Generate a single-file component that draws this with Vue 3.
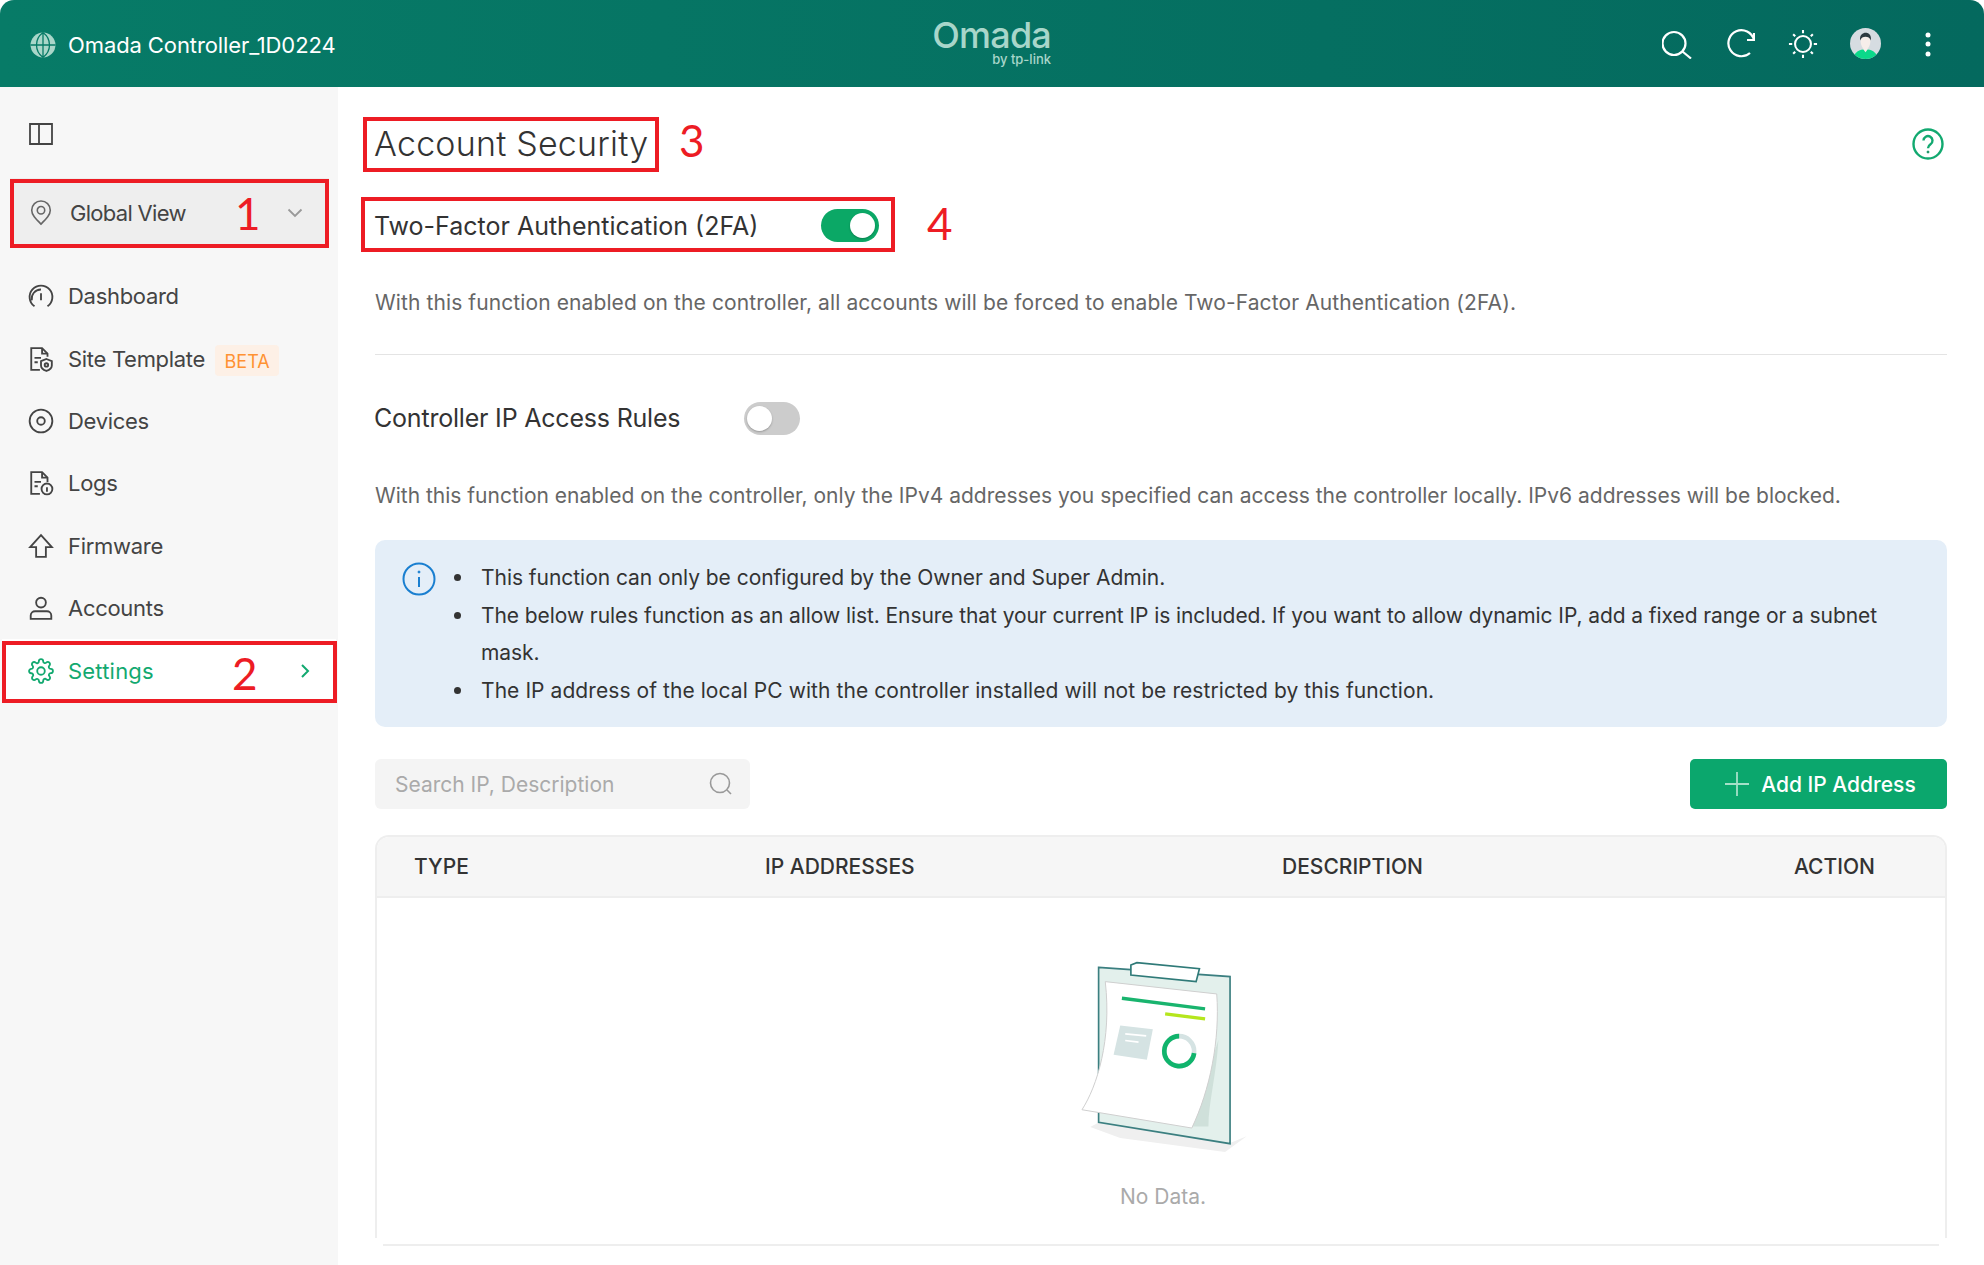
<template>
  <div class="page">
    <header class="topbar">
      <div class="brand">
        <svg class="globe" viewBox="0 0 24 24">
          <circle cx="12" cy="12" r="11.5" fill="#a9d6c9" />
          <path d="M12 .5v23M.5 12h23M12 .5c-8 6-8 17 0 23M12 .5c8 6 8 17 0 23" fill="none" stroke="#067a66" stroke-width="1.2" />
        </svg>
        <span>Omada Controller_1D0224</span>
      </div>
      <div class="logo">
        <span class="logo-name">Omada</span>
        <span class="logo-sub">by tp-link</span>
      </div>
      <div class="top-icons">
        <svg viewBox="0 0 30 30" class="top-icon">
          <circle cx="12" cy="14.500" r="11.500" />
          <path d="M20.500 22.500l8.500 7" />
        </svg>
        <svg viewBox="0 0 30 30" class="top-icon">
          <path d="M25 24A13 13 0 1 1 29 11" />
          <path d="M29 4v7h-7" />
        </svg>
        <svg viewBox="0 0 32 32" class="top-icon">
          <circle cx="16" cy="16" r="8.500" />
          <path d="M16 1v3.500M16 27.500V31M1 16h3.500M27.500 16H31M5.500 5.500l2.200 2.200M24.300 24.300l2.200 2.200M5.500 26.500l2.200-2.200M24.300 7.700l2.200-2.200" />
        </svg>
        <svg viewBox="0 0 32 32" class="avatar">
          <clipPath id="av"><circle cx="16" cy="16" r="16" /></clipPath>
          <g clip-path="url(#av)">
            <rect width="32" height="32" fill="#d6dce1" />
            <path d="M3 32c1-7 7-10 13-10s12 3 13 10z" fill="#0bd98a" />
            <path d="M13 21h6l-3 4z" fill="#f6eeea" />
            <ellipse cx="16" cy="14" rx="5" ry="8" fill="#f6eeea" />
            <path d="M10.500 13c-1-6 3-8 5.500-8s6.500 1.500 5.500 8c-1-3-3-4-5.500-4s-4.500 1-5.500 4z" fill="#2c3a40" />
          </g>
        </svg>
        <svg viewBox="0 0 28 28" class="top-dots">
          <circle cx="14" cy="5" r="2.500" />
          <circle cx="14" cy="14" r="2.500" />
          <circle cx="14" cy="24" r="2.500" />
        </svg>
      </div>
    </header>

    <div class="body-wrap">
      <aside class="sidebar">
        <svg class="collapse" viewBox="0 0 24 22">
          <path d="M1 1h22v20H1zM10 1v20" />
        </svg>
        <div class="site-select">
          <svg class="nav-icon" viewBox="0 0 24 28">
            <path d="M12 26c-6-6-10-10-10-15a10 10 0 0 1 20 0c0 5-4 9-10 15z" />
            <circle cx="12" cy="11" r="4" />
          </svg>
          <span>Global View</span>
          <svg class="chev" viewBox="0 0 16 10"><path d="M1.500 1.500l6.500 6.500 6.500-6.500" /></svg>
        </div>
        <nav class="menu">
          <a v-for="item in menu" :key="item.name" class="menu-item" :class="{ active: item.active }">
            <svg class="nav-icon" viewBox="0 0 24 24" v-html="item.icon"></svg>
            <span>{{ item.name }}</span>
            <em v-if="item.badge" class="badge">{{ item.badge }}</em>
            <svg v-if="item.active" class="chev-right" viewBox="0 0 10 16"><path d="M2 2l6 6-6 6" /></svg>
          </a>
        </nav>
      </aside>

      <main class="content">
        <div class="title-row">
          <h1>Account Security</h1>
          <svg class="help" viewBox="0 0 32 32">
            <circle cx="16" cy="16" r="14.500" />
            <path d="M11.500 12.500a4.500 4.500 0 1 1 7 3.800c-1.700 1.100-2.500 2-2.500 4" />
            <circle cx="16" cy="24" r="1" class="dot" />
          </svg>
        </div>
        <div class="switch-row">
          <h2 class="h-2fa">Two-Factor Authentication (2FA)</h2>
          <span class="switch on"></span>
        </div>
        <p class="desc first">With this function enabled on the controller, all accounts will be forced to enable Two-Factor Authentication (2FA).</p>
        <hr class="divider" />
        <div class="switch-row second">
          <h2 class="h-rules">Controller IP Access Rules</h2>
          <span class="switch"></span>
        </div>
        <p class="desc">With this function enabled on the controller, only the IPv4 addresses you specified can access the controller locally. IPv6 addresses will be blocked.</p>

        <div class="info">
          <svg class="info-icon" viewBox="0 0 34 34">
            <circle cx="17" cy="17" r="15.500" />
            <path d="M17 15v10" />
            <circle cx="17" cy="10" r="1" class="dot" />
          </svg>
          <ul>
            <li v-for="note in notes" :key="note">{{ note }}</li>
          </ul>
        </div>

        <div class="toolbar">
          <div class="search">
            <span>Search IP, Description</span>
            <svg viewBox="0 0 24 24"><circle cx="11" cy="11" r="9.500" /><path d="M18 18l4 4" /></svg>
          </div>
          <button class="add-btn">
            <svg viewBox="0 0 24 24"><path d="M12 0v24M0 12h24" /></svg>
            Add IP Address
          </button>
        </div>

        <div class="table">
          <div class="thead">
            <span v-for="col in columns" :key="col">{{ col }}</span>
          </div>
          <div class="tbody">
            <svg class="empty-art" viewBox="120 90 500 580">
              <path d="M150 592L175 578L570 640L620 620L555 667L240 625z" fill="#efefef" />
              <path d="M175 112L570 140V642L175 578z" fill="#e3f0ec" stroke="#3b7f80" stroke-width="5" />
              <path d="M535 330C530 430 505 520 505 590L455 590z" fill="#cfe0da" />
              <path d="M272 105L290 98L478 116L468 155L272 135z" fill="#fff" stroke="#2f7a78" stroke-width="5" />
              <path d="M195 155L530 192C540 330 510 480 455 595L125 540C170 470 215 330 195 155z" fill="#fff" stroke="#cfcfcf" stroke-width="3" />
              <path d="M245 205L495 237" stroke="#19b46e" stroke-width="10" />
              <path d="M375 252L495 267" stroke="#b5e61d" stroke-width="10" />
              <path d="M240 287L338 298L320 390L220 375z" fill="#d5e3e3" />
              <path d="M255 312L318 318M255 332L295 337" stroke="#fff" stroke-width="5" />
              <circle cx="417" cy="364" r="45" fill="none" stroke="#d5e3e3" stroke-width="14" />
              <path d="M417 319A45 45 0 1 0 462 370" fill="none" stroke="#10b46c" stroke-width="14" />
            </svg>
            <p class="no-data">No Data.</p>
          </div>
        </div>
        <div class="table-end"></div>
      </main>
    </div>

    <!-- red call-outs drawn on top of the screenshot -->
    <i class="mark mark-1"></i>
    <i class="mark mark-2"></i>
    <i class="mark mark-3"></i>
    <i class="mark mark-4"></i>
    <b class="num num-1">1</b>
    <b class="num num-2">2</b>
    <b class="num num-3">3</b>
    <b class="num num-4">4</b>
  </div>
</template>

<script setup>
const menu = [
  {
    name: 'Dashboard',
    icon: '<path d="M6 21.500A10.500 10.500 0 1 1 18 21.500"/><path d="M3.500 16A8.500 8.500 0 0 1 12 6"/><path d="M12 16V9.500"/>',
  },
  {
    name: 'Site Template',
    badge: 'BETA',
    icon: '<path d="M11 22H3V2h10l5 5v3"/><path d="M13 2v5h5M6 11h6M6 15h3"/><path d="M17 12l5 2v4c0 2-2 4-5 5-3-1-5-3-5-5v-4z"/><circle cx="17" cy="17.500" r="1.600"/>',
  },
  {
    name: 'Devices',
    icon: '<circle cx="12" cy="12" r="10.500"/><circle cx="12" cy="12" r="3.500"/>',
  },
  {
    name: 'Logs',
    icon: '<path d="M11 22H3V2h10l5 5v4"/><path d="M13 2v5h5M6 11h6M6 15h3"/><circle cx="17.500" cy="17.500" r="5"/><path d="M17.500 16v4M17.500 14.500v.1"/>',
  },
  {
    name: 'Firmware',
    icon: '<path d="M12 2L2 13h5.500v9h9v-9H22z"/>',
  },
  {
    name: 'Accounts',
    icon: '<circle cx="12" cy="7" r="4.500"/><path d="M2.500 22v-3c0-2.500 2-4 4-4h11c2 0 4 1.500 4 4v3z"/>',
  },
  {
    name: 'Settings',
    active: true,
    icon: '<circle cx="12" cy="12" r="3.500"/><path d="M19.400 15a1.650 1.650 0 0 0 .33 1.820l.06.06a2 2 0 0 1 0 2.830 2 2 0 0 1-2.830 0l-.06-.06a1.650 1.650 0 0 0-1.820-.33 1.650 1.650 0 0 0-1 1.510V21a2 2 0 0 1-2 2 2 2 0 0 1-2-2v-.09A1.650 1.650 0 0 0 9 19.400a1.650 1.650 0 0 0-1.820.33l-.06.06a2 2 0 0 1-2.830 0 2 2 0 0 1 0-2.830l.06-.06a1.650 1.650 0 0 0 .33-1.820 1.650 1.650 0 0 0-1.510-1H3a2 2 0 0 1-2-2 2 2 0 0 1 2-2h.09A1.650 1.650 0 0 0 4.600 9a1.650 1.650 0 0 0-.33-1.820l-.06-.06a2 2 0 0 1 0-2.830 2 2 0 0 1 2.830 0l.06.06a1.650 1.650 0 0 0 1.820.33H9a1.650 1.650 0 0 0 1-1.510V3a2 2 0 0 1 2-2 2 2 0 0 1 2 2v.09a1.650 1.650 0 0 0 1 1.510 1.650 1.650 0 0 0 1.820-.33l.06-.06a2 2 0 0 1 2.830 0 2 2 0 0 1 0 2.830l-.06.06a1.650 1.650 0 0 0-.33 1.820V9a1.650 1.650 0 0 0 1.510 1H21a2 2 0 0 1 2 2 2 2 0 0 1-2 2h-.09a1.650 1.650 0 0 0-1.510 1z"/>',
  },
]

const notes = [
  'This function can only be configured by the Owner and Super Admin.',
  'The below rules function as an allow list. Ensure that your current IP is included. If you want to allow dynamic IP, add a fixed range or a subnet mask.',
  'The IP address of the local PC with the controller installed will not be restricted by this function.',
]

const columns = ['TYPE', 'IP ADDRESSES', 'DESCRIPTION', 'ACTION']
</script>

<style>
html,
body {
  margin: 0;
  background: #fff;
}
</style>

<style scoped>
.page {
  position: relative;
  width: 1984px;
  height: 1265px;
  overflow: hidden;
  font-family: Inter, "Liberation Sans", sans-serif;
  color: #333;
  background: #fff;
}

.topbar {
  height: 87px;
  box-sizing: border-box;
  padding: 0 25px 0 30px;
  display: flex;
  align-items: center;
  justify-content: space-between;
  position: relative;
  color: #fff;
  background: linear-gradient(90deg, #077b67, #04695e);
  border-radius: 14px 14px 0 0;
}

.brand {
  display: flex;
  align-items: center;
  gap: 12px;
  padding-top: 2px;
  font-size: 22px;
  letter-spacing: -0.1px;
}

.globe {
  width: 26px;
  height: 26px;
}

.logo {
  position: absolute;
  left: 931px;
  top: 18px;
  width: 120px;
  display: flex;
  flex-direction: column;
  align-items: flex-end;
  color: #a8d6ca;
}

.logo-name {
  font-size: 36px;
  font-weight: 500;
  line-height: 34px;
  letter-spacing: -0.8px;
}

.logo-sub {
  font-size: 13px;
  font-weight: 500;
  line-height: 14px;
}

.top-icons {
  display: grid;
  grid-auto-flow: column;
  grid-auto-columns: 62.6px;
  justify-items: center;
  align-items: center;
}

.top-icon {
  width: 30px;
  height: 30px;
  fill: none;
  stroke: #fff;
  stroke-width: 2.2;
}

.avatar {
  width: 31px;
  height: 31px;
}

.top-dots {
  width: 28px;
  height: 28px;
  fill: #fff;
}

.body-wrap {
  display: flex;
  height: 1178px;
}

.sidebar {
  width: 338px;
  flex: none;
  box-sizing: border-box;
  padding-top: 36px;
  background: #f7f7f7;
}

.collapse {
  display: block;
  width: 24px;
  height: 22px;
  margin-left: 29px;
  fill: none;
  stroke: #444;
  stroke-width: 1.8;
}

.site-select {
  height: 69px;
  margin: 33px 9px 0 10px;
  display: flex;
  align-items: center;
  padding-left: 18px;
  font-size: 22px;
  letter-spacing: -0.7px;
  color: #444;
  background: #eee;
}

.site-select .nav-icon {
  margin-right: 16px;
  stroke: #666;
}

.chev {
  width: 16px;
  height: 10px;
  margin-left: auto;
  margin-right: 26px;
  fill: none;
  stroke: #999;
  stroke-width: 1.8;
}

.menu {
  margin-top: 18px;
}

.menu-item {
  height: 62.4px;
  display: flex;
  align-items: center;
  padding-left: 28px;
  font-size: 22px;
  letter-spacing: -0.3px;
  color: #444;
}

.nav-icon {
  width: 26px;
  height: 26px;
  flex: none;
  margin-right: 14px;
  fill: none;
  stroke: #444;
  stroke-width: 1.7;
}

.badge {
  margin: 3px 0 0 10px;
  width: 64px;
  height: 31px;
  line-height: 33px;
  text-align: center;
  font-style: normal;
  font-size: 18px;
  letter-spacing: 0;
  color: #ff9233;
  background: #fdf0e6;
  border-radius: 4px;
}

.menu-item.active {
  color: #12a970;
  background: #fff;
  margin: 0 2px;
  padding-left: 26px;
  letter-spacing: 0.2px;
}

.menu-item.active .nav-icon {
  stroke: #12a970;
}

.chev-right {
  width: 10px;
  height: 16px;
  margin-left: auto;
  margin-right: 26px;
  fill: none;
  stroke: #12a970;
  stroke-width: 2;
}

.content {
  flex: 1;
  min-width: 0;
  box-sizing: border-box;
  padding: 36px 37px 0;
}

.title-row {
  height: 42px;
  display: flex;
  align-items: center;
  justify-content: space-between;
}

h1 {
  margin: -2px 0 0 -1px;
  font-size: 34px;
  font-weight: 300;
  letter-spacing: 0.2px;
  color: #333;
}

.help {
  width: 32px;
  height: 32px;
  margin-right: 3px;
  fill: none;
  stroke: #12a970;
  stroke-width: 2.4;
}

.dot {
  fill: currentColor;
  stroke-width: 1;
}

.switch-row {
  height: 40px;
  margin-top: 40px;
  display: flex;
  align-items: center;
}

.switch-row.second {
  margin-top: 43px;
}

h2 {
  margin: 0 0 0 -1px;
  font-size: 25px;
  font-weight: 400;
  color: #333;
}

.h-2fa {
  width: 447px;
  padding-top: 2px;
}

.h-rules {
  width: 370px;
  letter-spacing: -0.2px;
}

.switch {
  position: relative;
  width: 56px;
  height: 33px;
  border-radius: 17px;
  background: #ccc;
}

.switch::after {
  content: "";
  position: absolute;
  top: 4px;
  left: 3px;
  width: 25px;
  height: 25px;
  border-radius: 50%;
  background: #fff;
  box-shadow: 0 1px 2px rgba(0, 0, 0, 0.25);
}

.switch.on {
  width: 58px;
  background: #0ba866;
}

.switch.on::after {
  left: auto;
  right: 4px;
}

.desc {
  margin: 43px 0 0;
  font-size: 21px;
  line-height: 30px;
  color: #666;
}

.desc.first {
  letter-spacing: 0.1px;
}

.divider {
  margin: 36px 0 0;
  border: none;
  border-top: 1px solid #e4e4e4;
}

.info {
  margin-top: 29px;
  box-sizing: border-box;
  height: 187px;
  padding: 19px 50px 18px 27px;
  display: flex;
  align-items: flex-start;
  background: #e4eef8;
  border-radius: 10px;
}

.info-icon {
  width: 34px;
  height: 34px;
  flex: none;
  margin-top: 3px;
  fill: none;
  color: #1a7fd0;
  stroke: #1a7fd0;
  stroke-width: 2;
}

.info ul {
  margin: 0 0 0 45px;
  padding: 0;
  list-style: none;
  font-size: 21px;
  line-height: 37.5px;
  color: #333;
}

.info li {
  position: relative;
  letter-spacing: -0.04px;
}

.info li:nth-child(2) {
  letter-spacing: -0.08px;
}

.info li:nth-child(3) {
  letter-spacing: 0.07px;
}

.info li::before {
  content: "";
  position: absolute;
  left: -27px;
  top: 15px;
  width: 7px;
  height: 7px;
  border-radius: 50%;
  background: #333;
}

.toolbar {
  margin-top: 32px;
  height: 50px;
  display: flex;
  justify-content: space-between;
}

.search {
  width: 375px;
  box-sizing: border-box;
  padding: 0 17px 0 20px;
  display: flex;
  align-items: center;
  justify-content: space-between;
  font-size: 21px;
  color: #aaa;
  background: #f4f4f4;
  border-radius: 6px;
}

.search svg {
  width: 24px;
  height: 24px;
  fill: none;
  stroke: #999;
  stroke-width: 1.6;
}

.add-btn {
  width: 257px;
  border: none;
  border-radius: 5px;
  padding: 0 0 0 4px;
  display: flex;
  align-items: center;
  justify-content: center;
  gap: 12px;
  font-family: inherit;
  font-size: 21px;
  font-weight: 500;
  color: #fff;
  background: #0ba76d;
}

.add-btn svg {
  width: 24px;
  height: 24px;
  fill: none;
  stroke: #a5e0c8;
  stroke-width: 1.8;
}

.table {
  margin-top: 26px;
  height: 403px;
  box-sizing: border-box;
  border: 2px solid #eee;
  border-bottom: none;
  border-radius: 14px 14px 0 0;
}

.thead {
  height: 61px;
  box-sizing: border-box;
  padding-left: 37px;
  display: grid;
  grid-template-columns: 351px 517px 512px 1fr;
  align-items: center;
  font-size: 21px;
  font-weight: 500;
  color: #333;
  background: #f6f6f6;
  border-bottom: 2px solid #eee;
  border-radius: 12px 12px 0 0;
}

.tbody {
  display: flex;
  flex-direction: column;
  align-items: center;
  padding-left: 4px;
}

.empty-art {
  width: 167px;
  height: 193px;
  margin-top: 62px;
}

.no-data {
  margin: 31px 0 0;
  font-size: 21px;
  color: #aaa;
}

.table-end {
  margin: 6px 8px 0;
  border-top: 2px solid #eee;
}

.mark {
  position: absolute;
  box-sizing: border-box;
  border: 4px solid #ed1c24;
}

.mark-1 {
  left: 10px;
  top: 179px;
  width: 319px;
  height: 69px;
}

.mark-2 {
  left: 2px;
  top: 641px;
  width: 335px;
  height: 62px;
}

.mark-3 {
  left: 363px;
  top: 117px;
  width: 296px;
  height: 55px;
}

.mark-4 {
  left: 361px;
  top: 197px;
  width: 534px;
  height: 55px;
}

.num {
  position: absolute;
  font-family: Lato, "Open Sans", sans-serif;
  font-size: 44px;
  line-height: 44px;
  font-weight: 400;
  color: #ed1c24;
}

.num-1 {
  left: 235px;
  top: 191px;
}

.num-2 {
  left: 232px;
  top: 651px;
}

.num-3 {
  left: 679px;
  top: 118px;
}

.num-4 {
  left: 927px;
  top: 201px;
}
</style>
